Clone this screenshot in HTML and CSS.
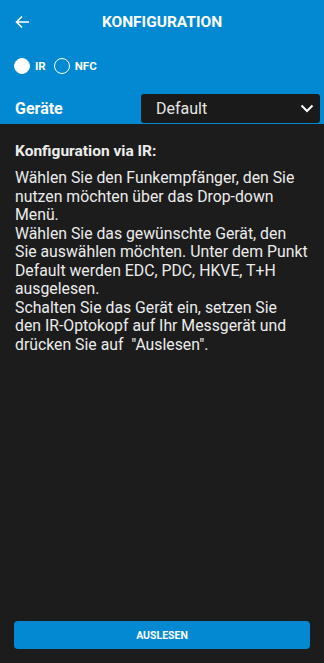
FILE: index.html
```html
<!DOCTYPE html>
<html lang="de">
<head>
<meta charset="utf-8">
<link rel="stylesheet" href="styles.css">
</head>
<body>
<div class="app">
  <header class="top">
    <div class="bar">
      <svg class="back" width="16" height="16" viewBox="0 0 16 16"><path d="M15 8H2.5M8 2.5L2.5 8L8 13.5" fill="none" stroke="#fff" stroke-width="1.6"/></svg>
      <h1 class="title">KONFIGURATION</h1>
    </div>
    <div class="radios">
      <span class="radio on"></span><span class="rlabel">IR</span>
      <span class="radio"></span><span class="rlabel">NFC</span>
    </div>
    <div class="devrow">
      <span class="devlabel">Geräte</span>
      <div class="select">
        <span>Default</span>
        <svg width="14" height="9" viewBox="0 0 14 9"><path d="M1.5 1.5L7 7L12.5 1.5" fill="none" stroke="#fff" stroke-width="2"/></svg>
      </div>
    </div>
  </header>
  <main class="content">
    <h2 class="heading">Konfiguration via IR:</h2>
    <p class="body">
      <span class="ln">Wählen Sie den Funkempfänger, den Sie</span>
      <span class="ln">nutzen möchten über das Drop-down</span>
      <span class="ln">Menü.</span>
      <span class="ln">Wählen Sie das gewünschte Gerät, den</span>
      <span class="ln">Sie auswählen möchten. Unter dem Punkt</span>
      <span class="ln">Default werden EDC, PDC, HKVE, T+H</span>
      <span class="ln">ausgelesen.</span>
      <span class="ln">Schalten Sie das Gerät ein, setzen Sie</span>
      <span class="ln">den IR-Optokopf auf Ihr Messgerät und</span>
      <span class="ln">drücken Sie auf &nbsp;"Auslesen".</span>
    </p>
  </main>
  <footer class="foot">
    <button class="btn">AUSLESEN</button>
  </footer>
</div>
</body>
</html>
```
FILE: styles.css
```css
* { box-sizing: border-box; margin: 0; padding: 0; }
html, body { width: 324px; height: 663px; }
body { background: #1c1c1c; font-family: Roboto, "Noto Sans", sans-serif; color: #fff; }
.app { display: flex; flex-direction: column; height: 663px; }
.top { background: #0289d1; height: 124px; padding: 0 4px 0 14px; }
.bar { height: 43px; display: flex; align-items: center; position: relative; }
.back { display: block; }
.title { position: absolute; left: 0; right: 0; text-align: center; font-size: 15.5px; font-weight: 700; margin-left: -14px; margin-right: -4px; }
.radios { display: flex; align-items: center; height: 46px; }
.radio { width: 16px; height: 16px; border-radius: 50%; border: 1.2px solid #fff; }
.radio.on { background: #fff; }
.rlabel { font-size: 11.5px; font-weight: 700; margin: 0 8px 0 5px; }
.devrow { display: flex; align-items: center; justify-content: space-between; height: 32px; margin-top: 3px; }
.devlabel { font-size: 16px; font-weight: 700; margin-left: 1px; }
.select { width: 179px; height: 29px; background: #1a1a1a; border-radius: 3px; display: flex; align-items: center; justify-content: space-between; padding: 0 6px 0 15px; font-size: 16px; color: #e6e6e6; }
.content { flex: 1; padding: 17px 6px 0 15px; }
.heading { font-size: 15.5px; font-weight: 700; color: #ececec; line-height: 20px; }
.body { font-size: 15.8px; line-height: 18.5px; color: #ececec; margin-top: 8px; }
.ln { display: block; white-space: nowrap; }
.foot { padding: 0 14px 14px 14px; }
.btn { width: 296px; height: 28px; background: #0289d1; border: none; border-radius: 4px; color: #fff; font-family: Roboto, sans-serif; font-size: 10.5px; font-weight: 700; }
```
